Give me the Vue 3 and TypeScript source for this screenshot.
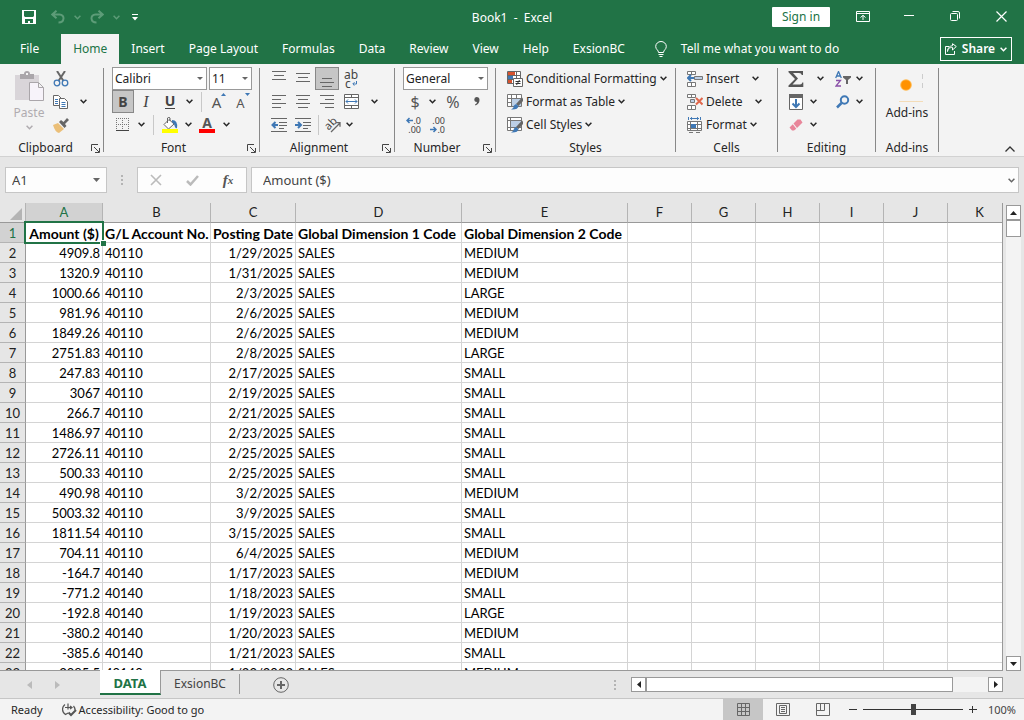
<script setup lang="ts">
import { h, ref } from 'vue'

interface Row { amount: string; account: string; date: string; size: string }

const Chevron = () =>
  h('svg', { width: 7, height: 5, viewBox: '0 0 7 5', fill: 'none', stroke: 'currentColor', 'stroke-width': 1.5, 'aria-hidden': 'true' }, [
    h('path', { d: 'M.6 .8 3.5 3.7 6.4 .8' }),
  ])
const Launcher = () =>
  h('svg', { width: 9, height: 9, viewBox: '0 0 9 9', fill: 'none', stroke: '#444', 'aria-hidden': 'true' }, [
    h('path', { d: 'M.5 7V.5H7M3 3l5 5M8.5 4v4.5H4' }),
  ])
const Lines = (p: { d: string }) =>
  h('svg', { width: 16, height: 16, viewBox: '0 0 16 16', fill: 'none', stroke: '#666', 'aria-hidden': 'true' }, [h('path', { d: p.d })])
Lines.props = ['d']

const tabs = ['File', 'Home', 'Insert', 'Page Layout', 'Formulas', 'Data', 'Review', 'View', 'Help', 'ExsionBC']
const columns = ['A', 'B', 'C', 'D', 'E', 'F', 'G', 'H', 'I', 'J', 'K']
const raw: [string, string, string, string][] = [
  ['4909.8', '40110', '1/29/2025', 'MEDIUM'],
  ['1320.9', '40110', '1/31/2025', 'MEDIUM'],
  ['1000.66', '40110', '2/3/2025', 'LARGE'],
  ['981.96', '40110', '2/6/2025', 'MEDIUM'],
  ['1849.26', '40110', '2/6/2025', 'MEDIUM'],
  ['2751.83', '40110', '2/8/2025', 'LARGE'],
  ['247.83', '40110', '2/17/2025', 'SMALL'],
  ['3067', '40110', '2/19/2025', 'SMALL'],
  ['266.7', '40110', '2/21/2025', 'SMALL'],
  ['1486.97', '40110', '2/23/2025', 'SMALL'],
  ['2726.11', '40110', '2/25/2025', 'SMALL'],
  ['500.33', '40110', '2/25/2025', 'SMALL'],
  ['490.98', '40110', '3/2/2025', 'MEDIUM'],
  ['5003.32', '40110', '3/9/2025', 'SMALL'],
  ['1811.54', '40110', '3/15/2025', 'SMALL'],
  ['704.11', '40110', '6/4/2025', 'MEDIUM'],
  ['-164.7', '40140', '1/17/2023', 'MEDIUM'],
  ['-771.2', '40140', '1/18/2023', 'SMALL'],
  ['-192.8', '40140', '1/19/2023', 'LARGE'],
  ['-380.2', '40140', '1/20/2023', 'MEDIUM'],
  ['-385.6', '40140', '1/21/2023', 'SMALL'],
  ['-3085.5', '40140', '1/22/2023', 'MEDIUM'],
]
const rows: Row[] = raw.map(([amount, account, date, size]) => ({ amount, account, date, size }))
const cellName = ref('A1')
const formula = ref('Amount ($)')
const zoom = ref(100)
</script>

<template>
  <div class="app">
    <header class="titlebar">
      <div class="quick">
        <button class="tb" aria-label="Save">
          <svg width="14" height="14" viewBox="0 0 14 14"><path fill="#fff" fill-rule="evenodd" d="M0 0h14v14H0zM2 1v5l1 1h8l1-1V1zM3 9v4h3v-2h2v2h3V9z" /></svg>
        </button>
        <button class="tb dim" aria-label="Undo">
          <svg width="14" height="14" viewBox="0 0 14 14" fill="none" stroke="currentColor" stroke-width="2"><path d="M5.500 .7 1.200 4.500l4.300 3.800M1.500 4.500h7c5.500 0 5.500 8-1 8" /></svg>
        </button>
        <button class="tb dim narrow" aria-label="Undo list"><Chevron /></button>
        <button class="tb dim" aria-label="Redo">
          <svg width="14" height="14" viewBox="0 0 14 14" fill="none" stroke="currentColor" stroke-width="2"><path d="M8.500 .7l4.300 3.800-4.300 3.800M12.500 4.500h-7c-5.500 0-5.500 8 1 8" /></svg>
        </button>
        <button class="tb dim narrow" aria-label="Redo list"><Chevron /></button>
        <button class="tb last" aria-label="Customize toolbar">
          <svg width="6" height="7" viewBox="0 0 6 7" fill="#fff"><path d="M0 0h6v1H0zM0 3h6L3 6.500z" /></svg>
        </button>
      </div>
      <h1>Book1&nbsp; -&nbsp; Excel</h1>
      <div class="winctl">
        <button class="signin">Sign in</button>
        <button class="wb" aria-label="Ribbon display options">
          <svg width="14" height="12" viewBox="0 0 14 12" fill="none" stroke="#fff"><path d="M.5 .5h13v10H.5zM.5 2.500h13M7 9V4.500M4.500 6.500 7 4.300l2.500 2.200" /></svg>
        </button>
        <button class="wb" aria-label="Minimize"><svg width="10" height="12" viewBox="0 0 10 12"><path stroke="#fff" d="M0 4.500h10" /></svg></button>
        <button class="wb" aria-label="Restore">
          <svg width="10" height="12" viewBox="0 0 10 12" fill="none" stroke="#fff"><rect x=".5" y="2.500" width="7" height="7" rx="1" /><path d="M2.500 .5H8q1.500 0 1.500 1.500v5.500" /></svg>
        </button>
        <button class="wb" aria-label="Close"><svg width="11" height="13" viewBox="0 0 11 13"><path stroke="#fff" stroke-width="1.200" d="M.5 .5l10 10M10.500 .5l-10 10" /></svg></button>
      </div>
    </header>

    <nav class="tabs" aria-label="Ribbon tabs">
      <button v-for="t in tabs" :key="t" class="tab" :class="{ active: t === 'Home', file: t === 'File' }">{{ t }}</button>
      <button class="tell">
        <svg width="12" height="17" viewBox="0 0 12 17" fill="none" stroke="#fff"><path d="M3.500 11.500C3.500 9 .7 8.500 .7 5.500a5.300 5 0 0 1 10.600 0c0 3-2.800 3.500-2.800 6zM3.500 13.500h5M4.500 15.500h3" /></svg>
        Tell me what you want to do
      </button>
      <button class="share">
        <svg width="12" height="12" viewBox="0 0 12 12" fill="none" stroke="#fff"><path d="M4 3.500H.5v8h9V8M2.500 8.500C3 5 5 4.500 7.500 4.500V7L11.300 3.500 7.500 .7v2C4.500 3 2.500 5 2.500 8.500" /></svg>
        Share <Chevron />
      </button>
    </nav>

    <section class="ribbon">
      <div class="group clipboard">
        <div class="body side">
          <button class="paste">
            <svg width="29" height="31" viewBox="0 0 29 31"><path fill="#d9d5d9" d="M0 4h24v25H0z" /><path fill="#aaa6aa" d="M5 3h4q0-3 3-3t3 3h4v5H5z" /><path fill="#f3f3f3" d="M11 2h2v2h-2z" /><path fill="#f7f3fa" stroke="#aaa6aa" d="M14.500 11.500h9l5 5v13h-14zM23.500 11.500v5h5" /></svg>
            <span>Paste</span><Chevron />
          </button>
          <div class="stack">
            <div class="row"><button class="ib" aria-label="Cut">
              <svg width="16" height="16" viewBox="0 0 16 16" fill="none"><path stroke="#666" stroke-width="2" d="M4 0l6.500 10M12 0 5.500 10" /><circle cx="4" cy="12" r="2.800" stroke="#3f78b5" stroke-width="1.300" /><circle cx="12" cy="12" r="2.800" stroke="#3f78b5" stroke-width="1.300" /></svg>
            </button></div>
            <div class="row"><button class="ib" aria-label="Copy">
              <svg width="16" height="16" viewBox="0 0 16 16" fill="#fff" stroke="#666"><path d="M.5 1.500h5l3 3v7h-8z" /><path d="M6.500 4.500h5l3 3v7h-8z" /><path stroke="#3f78b5" d="M2 5.500h3M2 7.500h3M2 9.500h3M8.500 8.500h4M8.500 10.500h4M8.500 12.500h4" /></svg>
            </button><button class="chev w20" aria-label="Copy options"><Chevron /></button></div>
            <div class="row"><button class="ib" aria-label="Format painter">
              <svg width="16" height="16" viewBox="0 0 16 16"><path fill="#ebbf78" d="M0 8l5-2 6 6-5 4q-4-1-6-8z" /><path fill="#666" d="M6 5l2-2 2.500 2L14 1l2 2-4 4 1.500 2-2 2z" /></svg>
            </button></div>
          </div>
        </div>
        <div class="caption"><span>Clipboard</span><button class="launch" aria-label="Clipboard settings"><Launcher /></button></div>
      </div>

      <div class="group font">
        <div class="body">
          <div class="row boxes">
            <label class="combo family"><select aria-label="Font"><option>Calibri</option></select></label>
            <label class="combo size"><select aria-label="Font size"><option>11</option></select></label>
          </div>
          <div class="row">
            <button class="ib w22 on letter" aria-label="Bold"><b>B</b></button>
            <button class="ib letter it" aria-label="Italic">I</button>
            <button class="ib letter un" aria-label="Underline"><b>U</b></button>
            <button class="chev" aria-label="Underline options"><Chevron /></button>
            <i class="sep" />
            <button class="ib grow" aria-label="Increase font size">A<svg width="5" height="3" viewBox="0 0 5 3"><path fill="#3f78b5" d="M0 3h5L2.500 0z" /></svg></button>
            <button class="ib grow small" aria-label="Decrease font size">A<svg width="5" height="3" viewBox="0 0 5 3"><path fill="#3f78b5" d="M0 0h5L2.500 3z" /></svg></button>
          </div>
          <div class="row">
            <button class="ib w22" aria-label="Borders">
              <svg width="14" height="14" viewBox="0 0 14 14" fill="none"><path stroke="#777" stroke-dasharray="1 1" d="M0 .5h13M0 6.500h13M.5 0v13M6.500 0v13M12.500 0v13" /><path stroke="#444" d="M0 12.500h13" /></svg>
            </button>
            <button class="chev" aria-label="Border options"><Chevron /></button>
            <i class="sep" />
            <button class="ib w22" aria-label="Fill color">
              <svg width="16" height="16" viewBox="0 0 16 16"><path fill="#fff" stroke="#666" d="M7 2.500 12 7l-5.500 5L2 7.500z" /><path fill="none" stroke="#666" d="M5.500 6V1q1.500-1.500 2.500 0v3" /><path fill="#3f78b5" d="M10 3q6 0 5 8-1 1-2-1 0-3-3-5z" /><path fill="#ff0" d="M0 12h16v4H0z" /></svg>
            </button>
            <button class="chev" aria-label="Fill options"><Chevron /></button>
            <button class="ib fontcolor" aria-label="Font color"><b>A</b></button>
            <button class="chev" aria-label="Font color options"><Chevron /></button>
          </div>
        </div>
        <div class="caption"><span>Font</span><button class="launch" aria-label="Font settings"><Launcher /></button></div>
      </div>

      <div class="group align">
        <div class="body">
          <div class="row">
            <button class="ib" aria-label="Top align"><Lines d="M1 .5h14M3 4.500h10M1 8.500h14" /></button>
            <button class="ib" aria-label="Middle align"><Lines d="M1 4.500h14M3 8.500h10M1 12.500h14" class="mid" /></button>
            <button class="ib on" aria-label="Bottom align"><Lines d="M3 7.500h10M1 11.500h14M3 15.500h10" /></button>
            <button class="ib wrap" aria-label="Wrap text"><span>ab</span><span>c<svg width="5" height="5" viewBox="0 0 5 5" fill="none" stroke="#3f78b5"><path d="M4.500 0v3H1M2.500 1.200.8 3l1.700 1.700" /></svg></span></button>
          </div>
          <div class="row">
            <button class="ib" aria-label="Align left"><Lines d="M1 3.500h14M1 7.500h9M1 11.500h14M1 15.500h9" class="mid" /></button>
            <button class="ib" aria-label="Center"><Lines d="M1 3.500h14M3 7.500h10M1 11.500h14M3 15.500h10" class="mid" /></button>
            <button class="ib" aria-label="Align right"><Lines d="M1 3.500h14M6 7.500h9M1 11.500h14M6 15.500h9" class="mid" /></button>
            <button class="ib" aria-label="Merge and center">
              <svg width="15" height="15" viewBox="0 0 15 15" fill="#fff" stroke="#666"><path d="M.5 .5h14v14H.5zM.5 3.500h14M.5 11.500h14M7.500 .5v3M7.500 11.500v3" /><path fill="none" stroke="#3f78b5" d="M2 7.500h11M4 5.500l-2 2 2 2M11 5.500l2 2-2 2" /></svg>
            </button>
            <button class="chev w22" aria-label="Merge options"><Chevron /></button>
          </div>
          <div class="row">
            <button class="ib" aria-label="Decrease indent">
              <svg width="16" height="14" viewBox="0 0 16 14" fill="none" stroke="#666"><path d="M0 .5h16M8 4.500h8M8 7.500h8M8 10.500h5M0 13.500h16" /><path stroke="#3f78b5" stroke-width="2" d="M7 7H2M4.500 4 1.500 7l3 3" /></svg>
            </button>
            <button class="ib" aria-label="Increase indent">
              <svg width="16" height="14" viewBox="0 0 16 14" fill="none" stroke="#666"><path d="M0 .5h16M8 4.500h8M8 7.500h8M8 10.500h5M0 13.500h16" /><path stroke="#3f78b5" stroke-width="2" d="M0 7h5M3 4l3 3-3 3" /></svg>
            </button>
            <i class="sep tight" />
            <button class="ib w22 orient" aria-label="Orientation">
              <svg width="16" height="16" viewBox="0 0 16 16"><text x="0" y="11" font-family="Noto Sans, sans-serif" font-size="11" fill="#444" transform="rotate(-45 5 8)">ab</text><path fill="none" stroke="#666" stroke-width="1.300" d="M6 15l9-9M11 5.700h4v4" /></svg>
            </button>
            <button class="chev w10" aria-label="Orientation options"><Chevron /></button>
          </div>
        </div>
        <div class="caption"><span>Alignment</span><button class="launch" aria-label="Alignment settings"><Launcher /></button></div>
      </div>

      <div class="group number">
        <div class="body">
          <div class="row boxes"><label class="combo format"><select aria-label="Number format"><option>General</option></select></label></div>
          <div class="row">
            <button class="ib sym" aria-label="Accounting format">$</button>
            <button class="chev w10" aria-label="Accounting options"><Chevron /></button>
            <button class="ib sym w32" aria-label="Percent">%</button>
            <button class="ib w16" aria-label="Comma style"><svg width="6" height="9" viewBox="0 0 6 9"><path fill="#555" d="M2.500 0Q5.500 0 5.500 3 5.500 6.500 1.500 8.500L1 7.500Q3 6.500 3 5 .3 5 .3 2.500.3 0 2.500 0z" /></svg></button>
          </div>
          <div class="row">
            <button class="ib w22 dec" aria-label="Increase decimal">
              <span><svg width="7" height="7" viewBox="0 0 7 7" fill="none" stroke="#3f78b5" stroke-width="1.500"><path d="M7 3.500H1M3.500 1 1 3.500 3.500 6" /></svg>.0</span><span>.00</span>
            </button>
            <button class="ib dec" aria-label="Decrease decimal">
              <span>.00</span><span><svg width="7" height="7" viewBox="0 0 7 7" fill="none" stroke="#3f78b5" stroke-width="1.500"><path d="M0 3.500h6M3.500 1 6 3.500 3.500 6" /></svg>.0</span>
            </button>
          </div>
        </div>
        <div class="caption"><span>Number</span><button class="launch" aria-label="Number settings"><Launcher /></button></div>
      </div>

      <div class="group styles">
        <div class="body">
          <div class="row"><button class="cmd">
            <svg width="16" height="16" viewBox="0 0 16 16"><path fill="#fff" stroke="#666" d="M.5 .5h13v12H.5zM.5 4.500h13M.5 8.500h13M9.500 .5v12" /><path fill="#d6532f" d="M1 1h7v3H1zM1 9h4v3H1z" /><path fill="#3f78b5" d="M1 5h5v3H1z" /><path fill="#fff" stroke="#666" d="M6.500 7.500h9v8h-9z" /><path stroke="#333" d="M8.500 10.500h5M8.500 12.500h5M12.500 9l-3 5" /></svg>
            Conditional Formatting <Chevron />
          </button></div>
          <div class="row"><button class="cmd">
            <svg width="16" height="16" viewBox="0 0 16 16"><path fill="#fff" stroke="#777" d="M.5 .5h14v12H.5zM.5 4.500h14M.5 8.500h14M4.500 .5v12M9.500 .5v12" /><path fill="#bccfe6" d="M5 5h9v7H5z" /><path fill="#666" d="M15 3.500l1 1V7l-4.500 5-2.500-2z" /><path fill="#3f78b5" d="M9 10l2.500 2Q11 16 4 15.500 7 14 7 11.500z" /></svg>
            Format as Table <Chevron />
          </button></div>
          <div class="row"><button class="cmd">
            <svg width="16" height="16" viewBox="0 0 16 16"><path fill="#fff" stroke="#777" d="M.5 .5h14v13H.5zM.5 3.500h14M.5 10.500h14M3.500 .5v13" /><path fill="#bccfe6" d="M4 4h10v6H4z" /><path fill="#666" d="M15 3.500l1 1V7l-4.500 5-2.500-2z" /><path fill="#3f78b5" d="M9 10l2.500 2Q11 16 4 15.500 7 14 7 11.500z" /></svg>
            Cell Styles <Chevron />
          </button></div>
        </div>
        <div class="caption"><span>Styles</span></div>
      </div>

      <div class="group cells">
        <div class="body">
          <div class="row"><button class="cmd">
            <svg width="16" height="16" viewBox="0 0 16 16" fill="#fff" stroke="#777"><path d="M.5 .5h8v3h-8zM4.500 .5v3M.5 11.500h8v4h-8zM4.500 11.500v4" /><path fill="#bccfe6" d="M7.500 5.500h8v3h-8z" /><path fill="none" stroke="#3f78b5" stroke-width="2" d="M7 7H1.500M4 4 1 7l3 3" /></svg>
            Insert</button><button class="chev after" aria-label="Insert options"><Chevron /></button></div>
          <div class="row"><button class="cmd">
            <svg width="16" height="16" viewBox="0 0 16 16" fill="#fff" stroke="#777"><path d="M.5 .5h8v3h-8zM4.500 .5v3M.5 11.500h8v4h-8zM4.500 11.500v4" /><path fill="#bccfe6" d="M3.500 5.500h4v3h-4z" /><path fill="none" stroke="#e0674c" stroke-width="2" d="M9 4l6.500 6.500M15.500 4 9 10.500" /></svg>
            Delete</button><button class="chev after" aria-label="Delete options"><Chevron /></button></div>
          <div class="row"><button class="cmd">
            <svg width="16" height="16" viewBox="0 0 16 16" fill="#fff" stroke="#777"><path stroke="#3f78b5" fill="none" d="M1.500 0v3M13.500 0v3M3 1.500h9M5 .2 3.500 1.500 5 2.800M10 .2l1.500 1.300L10 2.800" /><path d="M.5 4.500h14v9H.5zM.5 7.500h14M.5 11.500h14M3.500 4.500v9M10.500 4.500v9M2 15.500h4M9 15.500h4" /><path fill="#3f78b5" stroke="none" d="M4 7h5v4H4z" /></svg>
            Format <Chevron />
          </button></div>
        </div>
        <div class="caption"><span>Cells</span></div>
      </div>

      <div class="group editing">
        <div class="body">
          <div class="row">
            <button class="ib" aria-label="AutoSum"><svg width="16" height="16" viewBox="0 0 16 16"><path fill="#555" d="M.5 0H15v4h-1.200Q13.500 2 11 2H5l5 5.500L4.500 13.500H12q2 0 2.300-2h1V16H.5v-1.500L7 8 .5 1.200z" /></svg></button>
            <button class="chev w24" aria-label="AutoSum options"><Chevron /></button>
            <button class="ib w22" aria-label="Sort and filter">
              <svg width="16" height="16" viewBox="0 0 16 16" fill="none" stroke-width="1.300"><path stroke="#3f78b5" d="M.7 7 3.500 .5 6.300 7M1.700 5h3.600" /><path stroke="#8a50a8" d="M1 9.500h4.500L1 15h5" /><path fill="#666" d="M8 5h8v1.500L13 9v4h-2V9L8 6.500z" /></svg>
            </button>
            <button class="chev w10" aria-label="Sort options"><Chevron /></button>
          </div>
          <div class="row">
            <button class="ib" aria-label="Fill"><svg width="14" height="16" viewBox="0 0 14 16"><path fill="#fff" stroke="#666" d="M.5 .5h13v15H.5z" /><path fill="#666" d="M0 0h14v4H0z" /><path fill="none" stroke="#3f78b5" stroke-width="2" d="M7 5v8M3.500 9.500 7 13l3.500-3.500" /></svg></button>
            <button class="chev w10" aria-label="Fill options"><Chevron /></button>
            <button class="ib w22 find" aria-label="Find and select"><svg width="14" height="14" viewBox="0 0 14 14" fill="none" stroke="#3f78b5" stroke-width="2"><circle cx="8.500" cy="5" r="3.700" /><path stroke-width="2.500" d="M5.500 8 1 12.500" /></svg></button>
            <button class="chev w10" aria-label="Find options"><Chevron /></button>
          </div>
          <div class="row">
            <button class="ib" aria-label="Clear"><svg width="14" height="14" viewBox="0 0 14 14"><path fill="#e8869a" d="M8.500 1.500h3l2 3L8 10 4.500 5.500zM3.800 6.200 7.300 10.700 5 12.500H3L.5 9.500z" /></svg></button>
            <button class="chev w10" aria-label="Clear options"><Chevron /></button>
          </div>
        </div>
        <div class="caption"><span>Editing</span></div>
      </div>

      <div class="group addins">
        <div class="body"><button class="addin">
          <svg width="34" height="34" viewBox="0 0 34 34"><circle cx="16" cy="15" r="5.800" fill="#ffb84d" /><circle cx="16" cy="15" r="4.800" fill="#ff9200" /><path fill="none" stroke="#f3dcb8" d="M9 31.500h24" /><path fill="none" stroke="#ccc" stroke-dasharray="5 4" d="M32.500 4v18" /></svg>
          <span>Add-ins</span>
        </button></div>
        <div class="caption"><span>Add-ins</span></div>
      </div>
      <button class="collapse" aria-label="Collapse the ribbon"><svg width="10" height="6" viewBox="0 0 10 6"><path fill="none" stroke="#333" stroke-width="1.300" d="M.5 5.500 5 1l4.500 4.500" /></svg></button>
    </section>

    <section class="formulabar">
      <label class="namebox"><input v-model="cellName" aria-label="Name box" /><svg width="7" height="4" viewBox="0 0 7 4"><path fill="#666" d="M0 0h7L3.500 4z" /></svg></label>
      <span class="dots"><i /><i /><i /></span>
      <div class="fx">
        <button aria-label="Cancel"><svg width="12" height="12" viewBox="0 0 12 12"><path stroke="#bbb" stroke-width="1.600" d="M1 1l10 10M11 1 1 11" /></svg></button>
        <button aria-label="Enter"><svg width="13" height="11" viewBox="0 0 13 11"><path fill="none" stroke="#bbb" stroke-width="2.500" d="M1 6l3.500 3.500L12 1" /></svg></button>
        <button aria-label="Insert function" class="fn">f<sub>x</sub></button>
      </div>
      <label class="formula"><input v-model="formula" aria-label="Formula" /><Chevron /></label>
    </section>

    <main class="work">
      <div class="sheet">
        <table>
          <colgroup><col class="c-n" /><col class="c-a" /><col class="c-b" /><col class="c-c" /><col class="c-d" /><col class="c-d" /><col v-for="n in 6" :key="n" class="c-f" /></colgroup>
          <thead>
            <tr>
              <th class="corner"><svg width="12" height="12" viewBox="0 0 12 12"><path fill="#b4b4b4" d="M12 0v12H0z" /></svg></th>
              <th v-for="c in columns" :key="c" scope="col" :class="{ sel: c === 'A' }">{{ c }}</th>
            </tr>
          </thead>
          <tbody>
            <tr class="heads">
              <th scope="row" class="sel">1</th>
              <td class="cursor">Amount ($)<i class="outline" /></td><td>G/L Account No.</td><td class="num">Posting Date</td><td>Global Dimension 1 Code</td><td>Global Dimension 2 Code</td>
              <td v-for="n in 6" :key="n" />
            </tr>
            <tr v-for="(r, i) in rows" :key="i">
              <th scope="row">{{ i + 2 }}</th>
              <td class="num">{{ r.amount }}</td><td>{{ r.account }}</td><td class="num">{{ r.date }}</td><td>SALES</td><td>{{ r.size }}</td>
              <td v-for="n in 6" :key="n" />
            </tr>
          </tbody>
        </table>
      </div>
      <div class="vscroll">
        <button aria-label="Scroll up"><svg width="7" height="4" viewBox="0 0 7 4"><path fill="#222" d="M0 4h7L3.500 0z" /></svg></button>
        <div class="thumb" />
        <button class="end" aria-label="Scroll down"><svg width="7" height="4" viewBox="0 0 7 4"><path fill="#222" d="M0 0h7L3.500 4z" /></svg></button>
      </div>
    </main>

    <section class="sheetbar">
      <div class="navs">
        <button aria-label="Previous sheet"><svg width="5" height="8" viewBox="0 0 5 8"><path fill="#bbb" d="M5 0v8L0 4z" /></svg></button>
        <button aria-label="Next sheet"><svg width="5" height="8" viewBox="0 0 5 8"><path fill="#bbb" d="M0 0v8l5-4z" /></svg></button>
      </div>
      <button class="stab current">DATA</button>
      <button class="stab other">ExsionBC</button>
      <button class="add" aria-label="New sheet"><svg width="16" height="16" viewBox="0 0 16 16" fill="none" stroke="#666"><circle cx="8" cy="8" r="7.300" /><path stroke-width="2" d="M8 4v8M4 8h8" /></svg></button>
      <span class="dots"><i /><i /><i /></span>
      <div class="hscroll">
        <button aria-label="Scroll left"><svg width="4" height="7" viewBox="0 0 4 7"><path fill="#222" d="M4 0v7L0 3.500z" /></svg></button>
        <div class="hthumb" />
        <button class="end" aria-label="Scroll right"><svg width="4" height="7" viewBox="0 0 4 7"><path fill="#222" d="M0 0v7l4-3.500z" /></svg></button>
      </div>
    </section>

    <footer class="status">
      <span class="ready">Ready</span>
      <button class="acc">
        <svg width="16" height="14" viewBox="0 0 16 14" fill="none" stroke="#555" stroke-width="1.200"><path d="M4 1.500A6 6 0 0 0 4.500 11.500L7 10M12.500 3A6 6 0 0 1 14 7M7 .5v6M4 4.500h7M9 3l2 1.500L9 6" /><path stroke-width="2" d="M7.500 9.500l2.500 2.500 5-5" /></svg>
        Accessibility: Good to go
      </button>
      <div class="views">
        <button class="on" aria-label="Normal view"><svg width="13" height="13" viewBox="0 0 13 13" fill="none" stroke="#666"><path d="M.5 .5h12v12H.5zM4.500 .5v12M8.500 .5v12M.5 4.500h12M.5 8.500h12" /></svg></button>
        <button aria-label="Page layout view"><svg width="14" height="13" viewBox="0 0 14 13" fill="none" stroke="#666"><path d="M.5 .5h13v12H.5zM3.500 2.500h7v8h-7zM5 4.500h4M5 6.500h4M5 8.500h4" /></svg></button>
        <button aria-label="Page break view"><svg width="14" height="13" viewBox="0 0 14 13" fill="none" stroke="#666"><path d="M.5 .5h13v12H.5zM.5 7.500h8v-7M4.500 .5v7" /></svg></button>
      </div>
      <button class="zb" aria-label="Zoom out"><svg width="8" height="8" viewBox="0 0 8 8"><path stroke="#333" d="M0 3.500h8" /></svg></button>
      <input v-model="zoom" class="slider" type="range" min="0" max="200" aria-label="Zoom" />
      <button class="zb" aria-label="Zoom in"><svg width="8" height="8" viewBox="0 0 8 8"><path stroke="#333" d="M0 3.500h8M3.500 0v7" /></svg></button>
      <span class="pct">{{ zoom }}%</span>
    </footer>
  </div>
</template>

<style>
body { margin: 0; }
</style>

<style scoped>
.app { height: 100vh; display: flex; flex-direction: column; overflow: hidden; background: #e6e6e6; color: #262626; font: 12px/16px "Noto Sans", "Open Sans", sans-serif; }
* { box-sizing: border-box; }
button { font: inherit; color: inherit; background: none; border: 0; padding: 0; margin: 0; display: flex; align-items: center; justify-content: center; white-space: nowrap; flex: none; }
svg { flex: none; display: block; }

.titlebar { height: 34px; flex: none; background: #217346; color: #fff; display: grid; grid-template-columns: 1fr auto 1fr; align-items: center; }
.titlebar h1 { font-size: 12px; font-weight: 400; margin: 0; padding-top: 1px; }
.quick { display: flex; align-items: center; padding-left: 18px; }
.tb { width: 22px; height: 24px; }
.quick .tb:nth-child(2) { margin-left: 7px; }
.dim { color: #5d9c78; }
.narrow { width: 17px; }
.last { width: 27px; margin-left: -4px; }
.winctl { display: flex; justify-content: flex-end; align-items: center; }
.signin { width: 58px; height: 20px; background: #fff; color: #217346; border-radius: 1px; margin-right: 10px; }
.wb { width: 46px; height: 30px; }

.tabs { height: 30px; flex: none; background: #217346; color: #fff; display: flex; }
.tab { padding: 0 12px; }
.tab.file { padding: 0 22px 0 20px; }
.tab.active { background: #f3f3f3; color: #217346; }
.tell { gap: 14px; margin-left: 18px; }
.share { margin: 3px 12px 3px auto; width: 72px; border: 1px solid #fff; gap: 5px; font-weight: 600; }

.ribbon { height: 93px; flex: none; background: #f3f3f3; border-bottom: 1px solid #d2d2d2; display: flex; }
.group { margin-top: 4px; height: 84px; border-right: 1px solid #888; display: flex; flex-direction: column; flex: none; }
.body { height: 73px; margin-top: -1px; flex: none; }
.row { height: 23px; display: flex; align-items: center; }
.caption { height: 16px; flex: none; display: flex; align-items: center; }
.caption span { flex: 1; text-align: center; }
.launch { width: 16px; height: 14px; }
.clipboard { width: 104px; }
.clipboard .caption { padding-left: 4px; }
.font { width: 156px; }
.align { width: 135px; }
.number { width: 101px; }
.styles { width: 180px; }
.cells { width: 102px; }
.editing { width: 98px; }
.addins { width: 63px; }
.font .body, .number .body { padding-left: 8px; }
.align .body { padding-left: 7px; }
.styles .body, .cells .body { padding-left: 11px; }
.editing .body { padding-left: 6px; }
.side { display: flex; padding-left: 14px; }
.paste { flex-direction: column; width: 30px; color: #b0acb0; padding-top: 4px; gap: 3px; justify-content: flex-start; }
.paste svg:last-child { margin-top: 1px; }
.stack { padding-left: 5px; }
.ib { width: 24px; height: 23px; }
.chev { width: 14px; height: 23px; }
.w10 { width: 10px; }
.w16 { width: 16px; }
.w20 { width: 20px; }
.w22 { width: 22px; }
.w24 { width: 24px; }
.w32 { width: 32px; }
.on { background: #c6c6c6; border: 1px solid #888; }
.sep { width: 1px; height: 20px; background: #c8c8c8; margin: 0 5px; }
.sep.tight { margin: 0 3px; }
.boxes { gap: 2px; }
.combo { height: 23px; position: relative; display: block; }
.combo::after { content: ""; position: absolute; right: 4px; top: 10px; border: 3px solid transparent; border-top-color: #666; border-bottom: 0; }
.combo select { width: 100%; height: 100%; appearance: none; border: 1px solid #999; border-radius: 0; background: #fff; color: #222; font: inherit; padding: 0 0 0 2px; }
.family { width: 95px; }
.size { width: 43px; }
.format { width: 85px; }
.letter { font-size: 14px; color: #444; }
.it { font-family: "Liberation Serif", serif; font-style: italic; font-size: 16px; }
.un b { border-bottom: 1px solid #444; line-height: 14px; }
.grow { font-size: 15px; color: #555; align-items: flex-start; padding-top: 4px; }
.grow svg { margin-top: -1px; }
.grow.small { font-size: 13px; padding-top: 5px; }
.grow.small svg { margin-top: -2px; }
.fontcolor { font-size: 14px; color: #555; }
.fontcolor b { width: 16px; height: 16px; line-height: 12px; border-bottom: 4px solid #f00; text-align: center; }
.mid { margin-top: -4px; }
.wrap { flex-direction: column; line-height: 9px; color: #444; }
.wrap span { display: flex; align-items: center; gap: 1px; height: 9px; }
.orient svg { overflow: visible; }
.sym { font-size: 16px; color: #555; }
.dec { flex-direction: column; align-items: flex-end; padding-right: 4px; font-size: 9px; line-height: 9px; color: #444; }
.dec span { display: flex; align-items: center; }
.cmd { gap: 3px; height: 23px; }
.after { margin-left: 9px; }
.find { margin-left: 14px; }
.addin { flex-direction: column; width: 100%; justify-content: flex-start; padding-top: 3px; gap: 1px; }
.collapse { margin: auto 8px 2px auto; width: 12px; height: 10px; }

.formulabar { display: flex; flex: none; padding: 10px 5px; align-items: center; font-size: 13px; }
.namebox, .fx, .formula { height: 26px; border: 1px solid #c6c6c6; background: #fdfdfd; display: flex; align-items: center; }
.formulabar input { border: 0; background: none; font: inherit; color: #444; outline: 0; padding: 0; min-width: 0; flex: 1; }
.namebox { width: 102px; padding: 0 6px; }
.dots { display: flex; flex-direction: column; gap: 2px; width: 30px; align-items: center; }
.dots i { width: 2px; height: 2px; background: #b4b4b4; }
.fx { width: 110px; }
.fx button { flex: 1; }
.fn { font: italic 700 15px/16px "Liberation Serif", serif; color: #555; }
.fn sub { font-size: 11px; }
.formula { flex: 1; margin-left: 4px; padding: 0 3px 0 11px; color: #666; }

.work { flex: 1; min-height: 0; display: flex; }
.sheet { flex: 1; min-width: 0; overflow: hidden; border-bottom: 1px solid #999; border-right: 1px solid #999; background: #fff; }
table { border-collapse: separate; border-spacing: 0; table-layout: fixed; width: 1012px; font: 13px/17px Lato, "Open Sans", sans-serif; color: #000; }
.c-n { width: 26px; }
.c-a { width: 77px; }
.c-b { width: 108px; }
.c-c { width: 85px; }
.c-d { width: 166px; }
.c-f { width: 64px; }
th, td { height: 20px; padding: 2px 2px 0; border-right: 1px solid #d4d4d4; border-bottom: 1px solid #d4d4d4; white-space: nowrap; text-align: left; overflow: hidden; }
th { background: #e6e6e6; font-weight: 400; text-align: center; padding: 2px 0 0; color: #222; }
thead th { border-bottom-color: #999; border-right-color: #b4b4b4; padding: 0; }
tbody th { border-right-color: #999; border-bottom-color: #b4b4b4; }
th.sel { background: #d2d2d2; color: #217346; }
.corner svg { margin: 2px 2px 0 10px; }
.heads td { font-weight: 700; font-size: 14px; }
td.num { text-align: right; }
td.cursor { position: relative; overflow: visible; text-align: center; padding: 2px 0 0; }
.outline { position: absolute; inset: -2px; border: 2px solid #217346; }
.outline::after { content: ""; position: absolute; right: -4px; bottom: -4px; width: 5px; height: 5px; background: #217346; border: solid #fff; border-width: 1px 0 0 1px; box-sizing: content-box; }
.vscroll { width: 21px; margin-top: 2px; padding: 0 3px; display: flex; flex-direction: column; background: linear-gradient(90deg, #e6e6e6 3px, #f3f3f3 3px, #f3f3f3 18px, #e6e6e6 18px); }
.vscroll button, .hscroll button { width: 15px; height: 15px; background: #fff; border: 1px solid #999; }
.thumb { height: 17px; background: #fff; border: 1px solid #999; }
.vscroll .end { margin-top: auto; }

.sheetbar { height: 27px; flex: none; display: flex; align-items: center; }
.navs { width: 100px; display: flex; gap: 23px; padding-left: 27px; }
.stab { height: 25px; align-self: flex-start; font-size: 13px; }
.current { width: 61px; margin-top: -1px; padding-top: 2px; background: #fff; color: #217346; font-weight: 700; border-bottom: 2px solid #217346; border-right: 1px solid #999; position: relative; }
.other { width: 79px; height: 20px; margin-top: 3px; color: #444; border-right: 1px solid #999; font-size: 12px; }
.add { margin-left: 33px; }
.sheetbar .dots { margin-left: auto; width: 33px; }
.hscroll { width: 372px; flex: none; margin-right: 21px; display: flex; background: #f3f3f3; }
.hthumb { flex: 1; margin-right: 35px; border: 1px solid #999; background: #fff; }

.status { height: 22px; flex: none; background: #f3f3f3; border-top: 1px solid #c6c6c6; display: flex; align-items: center; padding: 0 8px 0 11px; font-size: 11px; }
.acc { margin-left: 18px; gap: 2px; }
.views { margin-left: auto; display: flex; height: 100%; }
.views button { width: 40px; }
.views .on { border: 0; }
.zb { width: 20px; height: 20px; }
.slider { appearance: none; width: 100px; height: 20px; margin: 0; background: linear-gradient(#333, #333) center / 100% 1px no-repeat; }
.slider::-webkit-slider-thumb { appearance: none; width: 5px; height: 11px; background: #444; }
.pct { width: 33px; text-align: right; color: #444; }
</style>
